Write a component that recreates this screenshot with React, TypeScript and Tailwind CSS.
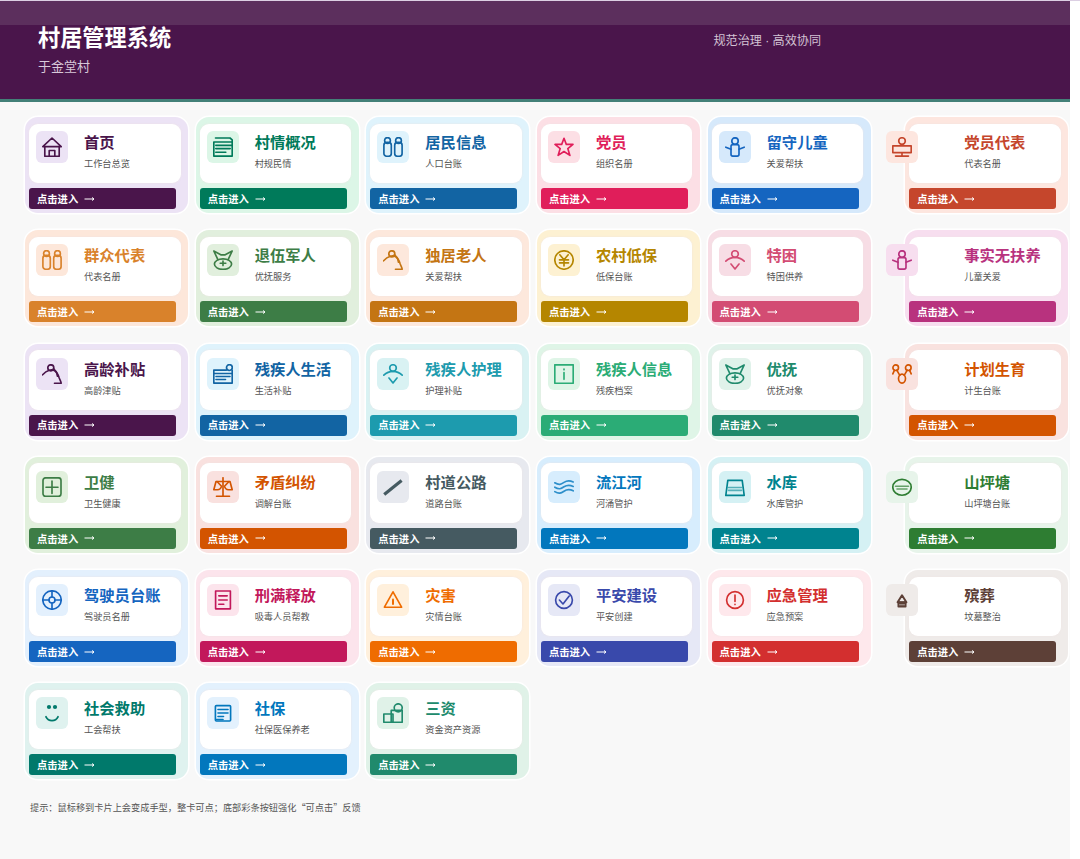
import type { ReactNode } from 'react';

type Module = {
  title: string;
  desc: string;
  icon: string;
  color: string;
  tint: string;
};

const MODULES: Module[] = [
  { title: '首页', desc: '工作台总览', icon: 'home', color: '#4a154b', tint: '#ece3f5' },
  { title: '村情概况', desc: '村规民情', icon: 'news', color: '#007a5a', tint: '#dcf6e7' },
  { title: '居民信息', desc: '人口台账', icon: 'people', color: '#1264a3', tint: '#dff3fc' },
  { title: '党员', desc: '组织名册', icon: 'star', color: '#e01e5a', tint: '#fcdfe5' },
  { title: '留守儿童', desc: '关爱帮扶', icon: 'child', color: '#1565c0', tint: '#d6e9fb' },
  { title: '党员代表', desc: '代表名册', icon: 'podium', color: '#c5462c', tint: '#fde6df' },
  { title: '群众代表', desc: '代表名册', icon: 'people', color: '#d9822b', tint: '#fde7da' },
  { title: '退伍军人', desc: '优抚服务', icon: 'medal', color: '#3d7d46', tint: '#e1efdd' },
  { title: '独居老人', desc: '关爱帮扶', icon: 'elder', color: '#c47513', tint: '#fde8dc' },
  { title: '农村低保', desc: '低保台账', icon: 'yen', color: '#b58600', tint: '#fdf1d2' },
  { title: '特困', desc: '特困供养', icon: 'care', color: '#d34c73', tint: '#f7dde5' },
  { title: '事实无扶养', desc: '儿童关爱', icon: 'child', color: '#b8327e', tint: '#f7deef' },
  { title: '高龄补贴', desc: '高龄津贴', icon: 'elder', color: '#4a154b', tint: '#ece3f5' },
  { title: '残疾人生活', desc: '生活补贴', icon: 'allowance', color: '#1264a3', tint: '#dff3fc' },
  { title: '残疾人护理', desc: '护理补贴', icon: 'care', color: '#1d9bae', tint: '#d9f2f3' },
  { title: '残疾人信息', desc: '残疾档案', icon: 'info', color: '#2bac76', tint: '#dff5e7' },
  { title: '优抚', desc: '优抚对象', icon: 'medal', color: '#208a6c', tint: '#e0f2ea' },
  { title: '计划生育', desc: '计生台账', icon: 'family', color: '#d35400', tint: '#f9e2df' },
  { title: '卫健', desc: '卫生健康', icon: 'health', color: '#3d7d46', tint: '#e1f0dc' },
  { title: '矛盾纠纷', desc: '调解台账', icon: 'scale', color: '#d35400', tint: '#f9e1df' },
  { title: '村道公路', desc: '道路台账', icon: 'road', color: '#455a61', tint: '#e7e9ef' },
  { title: '流江河', desc: '河涌管护', icon: 'river', color: '#0277bd', tint: '#d7edfd' },
  { title: '水库', desc: '水库管护', icon: 'reservoir', color: '#00838f', tint: '#d5f1f4' },
  { title: '山坪塘', desc: '山坪塘台账', icon: 'pond', color: '#2e7d32', tint: '#e7f4ea' },
  { title: '驾驶员台账', desc: '驾驶员名册', icon: 'wheel', color: '#1565c0', tint: '#e3f0fd' },
  { title: '刑满释放', desc: '吸毒人员帮教', icon: 'file', color: '#c2185b', tint: '#fce4ec' },
  { title: '灾害', desc: '灾情台账', icon: 'warning', color: '#ef6c00', tint: '#fff0dc' },
  { title: '平安建设', desc: '平安创建', icon: 'check', color: '#3949ab', tint: '#e6e8f6' },
  { title: '应急管理', desc: '应急预案', icon: 'alert', color: '#d32f2f', tint: '#fee8ec' },
  { title: '殡葬', desc: '坟墓整治', icon: 'tomb', color: '#5d4037', tint: '#efebe9' },
  { title: '社会救助', desc: '工会帮扶', icon: 'smile', color: '#00796b', tint: '#dff2ef' },
  { title: '社保', desc: '社保医保养老', icon: 'doc', color: '#0277bd', tint: '#e3f1fd' },
  { title: '三资', desc: '资金资产资源', icon: 'assets', color: '#208a6c', tint: '#e0f2e8' },
];

const ICONS: Record<string, ReactNode> = {
  home: (
    <>
      <path d="M.8 9.6 10 1l9.2 8.6Z" />
      <path d="M2.8 9.6v9.6h14.4V9.6M7.2 19.2v-5.700h5.600v5.700" />
    </>
  ),
  news: (
    <>
      <path d="M2.5 1h14.5l2.2 1.800v16.300H.8V5h18.400" />
      <path d="M2.8 8.300h16M2.800 11.600h14.400M2.800 15.200h10" />
    </>
  ),
  people: (
    <>
      <circle cx="4.5" cy="3.5" r="2.9" />
      <circle cx="15.5" cy="3.5" r="2.9" />
      <rect x=".9" y="5.4" width="7.4" height="13.8" rx="2.8" />
      <rect x="11.7" y="5.4" width="7.4" height="13.8" rx="2.8" />
    </>
  ),
  star: <path d="m10 1.300 2.300 6.100h6.700l-5.200 4.200 2.100 6.800L10 14.500l-5.900 3.900 2.100-6.800L1 7.400h6.700Z" />,
  child: (
    <>
      <circle cx="10" cy="4" r="3.2" />
      <rect x="6" y="7.6" width="8" height="11.5" rx="1.8" />
      <path d="M.8 10.200 6 12.300M19.200 10.200 14 12.300" />
    </>
  ),
  podium: (
    <>
      <circle cx="10" cy="4" r="3.3" />
      <path d="M.8 8.800h18.400v6.800H.8ZM10 15.600V19M3.500 19.100h13" />
    </>
  ),
  medal: (
    <>
      <path d="M4.900 9.600.8 1l7 3.800h4.400l7-3.800-4.100 8.600" />
      <ellipse cx="10" cy="14.1" rx="8.6" ry="5.3" />
      <path d="M10 11v4.600M7.200 13.200h5.600" />
    </>
  ),
  elder: (
    <>
      <circle cx="8.8" cy="3.8" r="3" />
      <path d="M.6 10.800C5 6 10 5 12.800 6.800s3.700 5.200 4.400 7.200c.8 2 1.800 3.500 2 5.200h-6.700" />
      <path d="m11.500 4.600 3 3.600 1 4" />
    </>
  ),
  yen: (
    <>
      <circle cx="10" cy="10" r="9.2" />
      <path d="m5.800 4.800 4.200 5 4.200-5M10 9.800v6.200M5.500 9.900h9M5.500 12.900h9" />
    </>
  ),
  care: (
    <>
      <circle cx="10" cy="4" r="3.3" />
      <path d="M.8 11.200c5.300-5.200 13.100-5.200 18.400 0M6 14l4 5 4-5" />
    </>
  ),
  allowance: (
    <>
      <path d="M13.500 6.100H.8v13h18.400v-13" />
      <circle cx="16.4" cy="3.6" r="2.9" />
      <path d="M.8 9.500h18.400M3 12.500h14M3 15.500h9.500" />
    </>
  ),
  info: (
    <>
      <rect x=".8" y=".8" width="18.4" height="18.4" />
      <path d="M10 8.500v6.800M10 5v.8" />
    </>
  ),
  family: (
    <>
      <circle cx="3.7" cy="3.7" r="2.8" />
      <circle cx="16.3" cy="3.7" r="2.8" />
      <ellipse cx="10" cy="14.6" rx="3.5" ry="4.5" />
      <path d="M2.500 6.200.8 9.800M4.800 6.200l3 5.200M17.500 6.200l1.700 3.600M15.200 6.200l-3 5.200" />
    </>
  ),
  health: (
    <>
      <rect x="1" y=".8" width="18" height="18.6" rx="2.6" />
      <path d="M10 4v12.400M4 10.200h12" />
    </>
  ),
  scale: (
    <>
      <path d="M10 .8v18.400M3.500 19.200h13M4 4.500h12" />
      <path d="M3 4.500.8 12.700h3.700c2.300 0 3.600-1.500 4-3.500L4 4.500ZM17 4.500l2.200 8.200h-3.700c-2.300 0-3.600-1.500-4-3.500L16 4.500Z" />
    </>
  ),
  road: <path d="M1.200 17.400 18.600 3.400" strokeWidth="3.2" strokeLinecap="butt" />,
  river: (
    <g opacity=".8">
      <path d="M.8 5.800c4.200 2.600 6.200 1.600 9.200-.4s5-2.400 9.200-.4M.8 10.200c4.200 2.600 6.200 1.600 9.200-.4s5-2.400 9.200-.4M.8 14.600c4.200 2.600 6.200 1.600 9.200-.4s5-2.400 9.200-.4" />
    </g>
  ),
  reservoir: (
    <>
      <path d="M2.800 3.400h14.400l2 15H.8Z" />
      <path d="M3.500 10.500h13M3.500 13.300h13" opacity=".6" />
    </>
  ),
  pond: (
    <>
      <ellipse cx="10" cy="10.3" rx="9.2" ry="7.9" />
      <path d="M3.500 9.200h13M5 12h10" opacity=".7" />
    </>
  ),
  wheel: (
    <>
      <circle cx="10" cy="10" r="9.2" />
      <circle cx="10" cy="10" r="3" />
      <path d="M10 .8V7M10 13v6.200M.8 10H7M13 10h6.200" />
    </>
  ),
  file: (
    <>
      <rect x="2.6" y="1" width="14.8" height="17.8" />
      <path d="M5.800 5.800h8.400M5.800 10h8.400M5.800 14.200h5" />
    </>
  ),
  warning: (
    <>
      <path d="m10 1.800 8.600 15.400H1.400Z" />
      <path d="M10 9.500v4.500" strokeWidth="2" />
    </>
  ),
  check: (
    <>
      <circle cx="10" cy="10" r="8.4" />
      <path d="m5.400 10 3.600 4 6.200-8" />
    </>
  ),
  alert: (
    <>
      <circle cx="10" cy="10" r="8.4" />
      <path d="M10 5v6.500M10 14.200v.4" />
    </>
  ),
  tomb: (
    <>
      <path d="m10 5.300 4.400 7H5.600Z" strokeWidth="2" />
      <path d="M6.300 12.300h7.400v4.400H6.300Z" fill="currentColor" />
      <path d="M7.500 14.800h5" stroke="#efebe9" strokeWidth=".6" />
    </>
  ),
  smile: (
    <>
      <circle cx="7" cy="4" r="2.1" fill="currentColor" stroke="none" />
      <circle cx="13" cy="4" r="2.1" fill="currentColor" stroke="none" />
      <path d="M4 13.800c2.500 5 9.500 5 12 0" strokeWidth="1.8" />
    </>
  ),
  doc: (
    <>
      <rect x="2.4" y="2.6" width="15.2" height="15.4" rx="1" />
      <path d="M5 6.500h10M5 10h10M5 13.500h5.500M3.500 16.500h6.500" />
    </>
  ),
  assets: (
    <>
      <rect x=".8" y="11" width="9.2" height="8.2" />
      <path d="M8.200 19.200V7.400h11v11.800Z" />
      <circle cx="15.2" cy="4.8" r="4" />
    </>
  ),
};

function ModuleIcon({ name }: { name: string }) {
  return (
    <svg
      viewBox="0 0 20 20"
      className="h-5 w-5"
      fill="none"
      stroke="currentColor"
      strokeWidth="1.65"
      strokeLinecap="round"
      strokeLinejoin="round"
    >
      {ICONS[name]}
    </svg>
  );
}

// The last column is pushed right, its icon tile hangs over the card edge
function ModuleCard({ item, last }: { item: Module; last: boolean }) {
  return (
    <a
      className={`flex h-[96px] w-[163px] cursor-pointer flex-col rounded-[13px] pt-[6.5px] pl-1 ring-[1.5px] ring-white ${last ? 'ml-auto' : ''}`}
      style={{ backgroundColor: item.tint, color: item.color }}
    >
      <div className="flex h-[59.5px] w-[151.5px] rounded-[9px] bg-white pt-[7.5px] shadow-[0_0_2px_rgba(240,230,230,0.9)]">
        <div
          className={`flex h-8 w-8 shrink-0 items-center justify-center rounded-md ${last ? '-ml-[23px] mr-[46px]' : 'ml-[7px] mr-4'}`}
          style={{ backgroundColor: item.tint }}
        >
          <ModuleIcon name={item.icon} />
        </div>
        <div className="-mt-px whitespace-nowrap">
          <h2 className="text-[15.3px] leading-[23px] font-bold">{item.title}</h2>
          <p className="mt-1 text-[9.2px] leading-[13px] text-[#555]">{item.desc}</p>
        </div>
      </div>
      <div
        className="mt-[5px] flex h-[21px] w-[147px] items-center gap-[6px] rounded-[3px] pl-2 text-[10.3px] font-bold text-white"
        style={{ backgroundColor: item.color }}
      >
        <span>点击进入</span>
        <svg viewBox="0 0 11 6" className="h-[6px] w-[11px]" fill="none" stroke="currentColor">
          <path d="M.5 3h9.500M8 1.500 10 3 8 4.500" />
        </svg>
      </div>
    </a>
  );
}

export default function App() {
  return (
    <div
      lang="zh-CN"
      className="h-[859px] w-[1080px] overflow-hidden bg-white font-['Noto_Sans_CJK_SC',sans-serif]"
    >
      <div className="h-px bg-[#dccfe3]" />
      <div className="h-[858px] w-[1070px] bg-[#f8f8f8]">
        <header className="h-[101px] border-b-[3px] border-[#438078] bg-[#4a154b]">
          <div className="h-6 bg-[#5c2f5d]" />
          <div className="flex justify-between pl-[38px] pr-[249px] text-white">
            <div className="-mt-[5px]">
              <h1 className="text-[22.2px] leading-8 font-bold">村居管理系统</h1>
              <p className="mt-1 text-[13px] leading-5 text-[#d9c9da]">于金堂村</p>
            </div>
            <p className="mt-[6px] font-['Liberation_Sans','Noto_Sans_CJK_SC',sans-serif] text-[12.1px] leading-5 text-[#d3c3d4]">
              规范治理 · 高效协同
            </p>
          </div>
        </header>
        <main className="pt-[15px] pl-[25px]">
          <div className="grid w-max grid-cols-[163px_163px_163px_163px_163px_190px] gap-x-[7.65px] gap-y-[17.3px]">
            {MODULES.map((item, i) => (
              <ModuleCard key={item.title} item={item} last={i % 6 === 5} />
            ))}
          </div>
          <p className="mt-[20px] ml-[5px] text-[9.2px] leading-4 text-[#555]">
            提示：鼠标移到卡片上会变成手型，整卡可点；底部彩条按钮强化“可点击”反馈
          </p>
        </main>
      </div>
    </div>
  );
}
